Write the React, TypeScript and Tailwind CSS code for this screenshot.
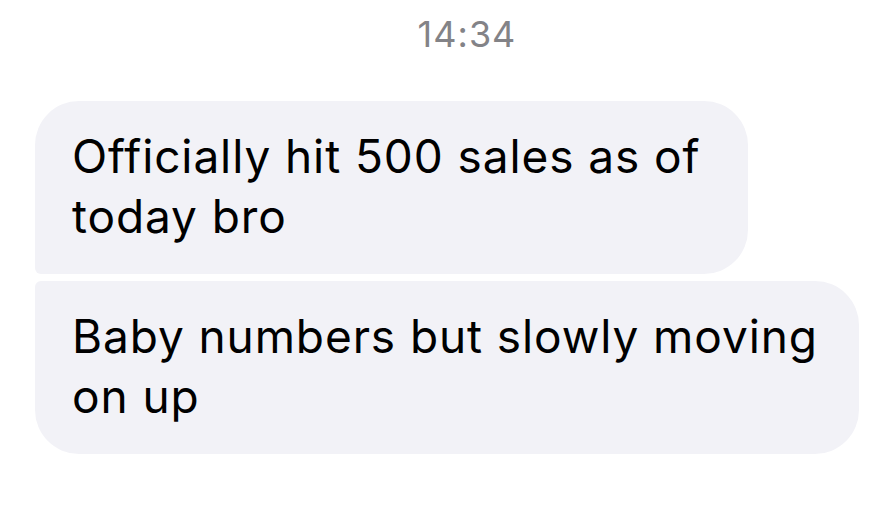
import React from "react";

export default function App() {
  return (
    <div
      className="w-[880px] h-[509px] bg-white overflow-hidden"
      style={{ fontFamily: "Inter, 'Liberation Sans', sans-serif" }}
    >
      <div className="flex justify-center pl-[54px] pt-[12px] h-[101px]">
        <span className="text-[36px] leading-[44px] tracking-[1px] text-[#838387]">14:34</span>
      </div>
      <div className="flex flex-col gap-[7px] pl-[35px]">
        <div className="w-[713px] h-[173px] bg-[#f2f2f7] rounded-tl-[44px] rounded-tr-[44px] rounded-br-[44px] rounded-bl-[6px] pl-[37px] pt-[25px]">
          <p className="text-[46px] leading-[60px] tracking-[0.9px] text-black">
            Officially hit 500 sales as of
            <br />
            today bro
          </p>
        </div>
        <div className="w-[824px] h-[173px] bg-[#f2f2f7] rounded-tl-[6px] rounded-tr-[44px] rounded-br-[44px] rounded-bl-[44px] pl-[37px] pt-[25px]">
          <p className="text-[46px] leading-[60px] tracking-[0.9px] text-black">
            Baby numbers but slowly moving
            <br />
            on up
          </p>
        </div>
      </div>
    </div>
  );
}
